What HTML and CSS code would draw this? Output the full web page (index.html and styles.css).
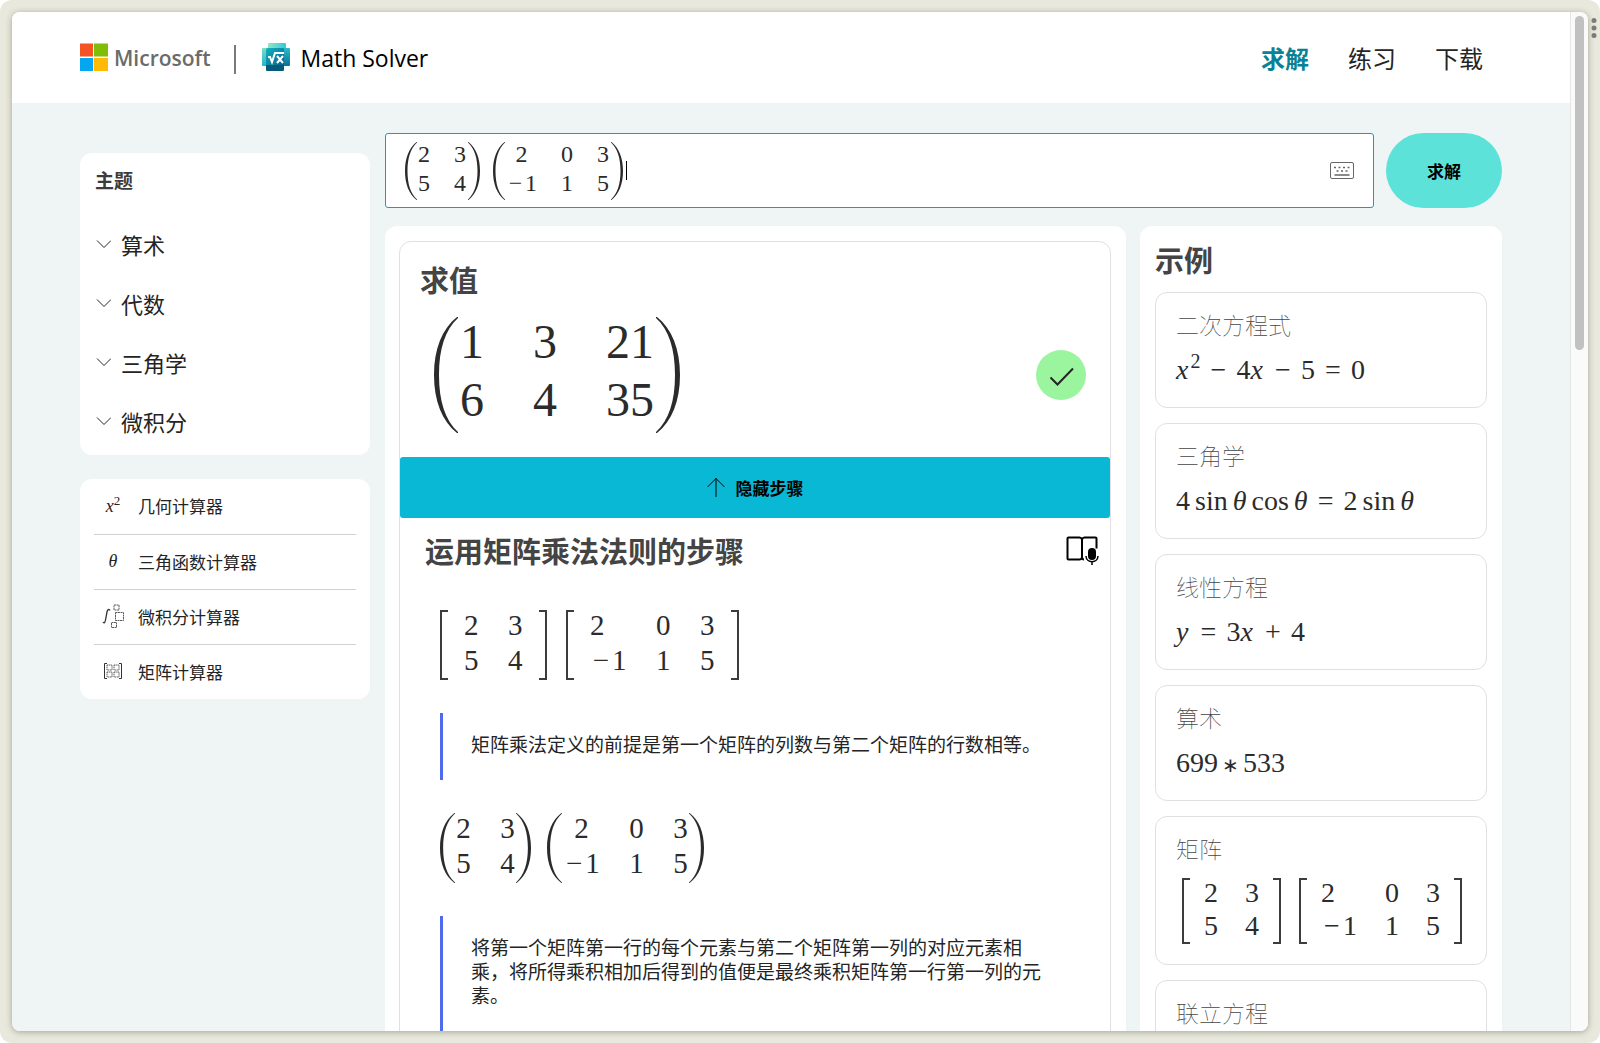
FILE: index.html
```html
<!DOCTYPE html>
<html lang="zh-CN">
<head>
<meta charset="utf-8">
<meta name="viewport" content="width=device-width, initial-scale=1">
<title>Microsoft Math Solver</title>
<link rel="stylesheet" href="styles.css">
</head>
<body>
<svg class="defs" aria-hidden="true">
  <symbol id="paren-l" viewBox="0 0 24 116" preserveAspectRatio="none"><path fill="currentColor" d="M23 0C8 12 0 32 0 58S8 104 23 116H24V115C11 103 5 84 5 58S11 13 24 1V0Z"/></symbol>
  <symbol id="paren-r" viewBox="0 0 24 116" preserveAspectRatio="none"><path fill="currentColor" d="M1 0C16 12 24 32 24 58S16 104 1 116H0V115C13 103 19 84 19 58S13 13 0 1V0Z"/></symbol>
  <symbol id="chevron" viewBox="0 0 16 16"><path fill="none" stroke="currentColor" d="M2 4.500l7 7 7-7"/></symbol>
</svg>
<div class="frame">
  <div class="window">
    <div class="page">
      <header class="header">
        <a class="brand" href="#">
          <svg width="28" height="28" viewBox="0 0 28 28" aria-hidden="true">
            <rect width="13" height="13" x="0" y="0.500" fill="#f35325"/><rect x="14" y="0.500" width="14" height="13" fill="#81bc06"/>
            <rect y="15" width="13" height="13" fill="#05a6f0"/><rect x="14" y="15" width="14" height="13" fill="#ffba08"/>
          </svg>
          <span class="brand-name">Microsoft</span>
        </a>
        <span class="divider"></span>
        <a class="product" href="#">
          <svg width="28" height="28" viewBox="0 0 28 28" aria-hidden="true">
            <defs>
              <linearGradient id="ga" x1="0" y1="0" x2="1" y2="0"><stop offset="0" stop-color="#8fe6c4"/><stop offset="1" stop-color="#32c8dc"/></linearGradient>
              <linearGradient id="gb" x1="0" y1="0" x2="0" y2="1"><stop offset="0" stop-color="#7fdcc0"/><stop offset="1" stop-color="#22b4d0"/></linearGradient>
              <linearGradient id="gc" x1="0" y1="0" x2="0" y2="1"><stop offset="0" stop-color="#2fb9c9"/><stop offset="1" stop-color="#087396"/></linearGradient>
              <linearGradient id="gd" x1="0" y1="0" x2="1" y2="1"><stop offset="0" stop-color="#11b3c4"/><stop offset="1" stop-color="#06648a"/></linearGradient>
            </defs>
            <rect x="6" y="0" width="18" height="14" rx="1" fill="url(#ga)"/>
            <rect x="0" y="5" width="12" height="18" rx="1" fill="url(#gb)"/>
            <rect x="14" y="5" width="14" height="18" rx="1" fill="url(#gc)"/>
            <rect x="4" y="14" width="18" height="14" rx="1" fill="#07597a"/>
            <path d="M6 5H22V22H4V7a2 2 0 0 1 2-2z" fill="url(#gd)"/>
            <path d="M6 14h2l2 5 3-9h9" fill="none" stroke="#fff" stroke-width="2"/>
            <path d="M15 13l6 7M21 13l-6 7" stroke="#fff" stroke-width="2"/>
          </svg>
          <span>Math Solver</span>
        </a>
        <nav class="nav">
          <a class="active" href="#">求解</a>
          <a href="#">练习</a>
          <a href="#">下载</a>
        </nav>
      </header>

      <div class="content">
        <aside class="sidebar">
          <section class="panel topics">
            <h2>主题</h2>
            <button type="button"><svg width="16" height="16"><use href="#chevron"/></svg>算术</button>
            <button type="button"><svg width="16" height="16"><use href="#chevron"/></svg>代数</button>
            <button type="button"><svg width="16" height="16"><use href="#chevron"/></svg>三角学</button>
            <button type="button"><svg width="16" height="16"><use href="#chevron"/></svg>微积分</button>
          </section>
          <nav class="panel calculators">
            <a href="#"><span class="calc-icon"><i>x</i><sup>2</sup></span>几何计算器</a>
            <a href="#"><span class="calc-icon"><i>θ</i></span>三角函数计算器</a>
            <a href="#"><span class="calc-icon"><svg width="24" height="24" viewBox="0 0 24 24" fill="none" stroke="#333"><path d="M9 6.500C8 4.500 6.500 5.500 6 8L4.500 16C4 19 3 19.500 2 18" stroke-width="1.300"/><g stroke-width=".8" stroke-dasharray="2 .5"><rect x="14.500" y="8.500" width="8" height="8"/><rect x="13" y="1" width="5" height="5"/><rect x="10.500" y="18.500" width="5" height="5"/></g></svg></span>微积分计算器</a>
            <a href="#"><span class="calc-icon"><svg width="20" height="18" viewBox="0 0 20 18" fill="none" stroke="#333"><path d="M4 1.500H1.500v15H4M16 1.500h2.500v15H16" stroke-width="1"/><g stroke-width=".8" stroke-dasharray="1.500 .6"><rect x="4" y="3" width="5" height="5"/><rect x="11" y="3" width="5" height="5"/><rect x="4" y="10" width="5" height="5"/><rect x="11" y="10" width="5" height="5"/></g></svg></span>矩阵计算器</a>
          </nav>
        </aside>

        <form class="search">
          <div class="math-field" role="textbox" tabindex="0" aria-label="输入数学题">
            <span class="mathline m24">
              <span class="matrix"><svg class="paren"><use href="#paren-l"/></svg><span class="cells two"><b>2</b><b>3</b><b>5</b><b>4</b></span><svg class="paren"><use href="#paren-r"/></svg></span>
              <span class="matrix"><svg class="paren"><use href="#paren-l"/></svg><span class="cells three"><b>2</b><b>0</b><b>3</b><b><span class="minus">−</span>1</b><b>1</b><b>5</b></span><svg class="paren"><use href="#paren-r"/></svg></span>
            </span>
            <span class="caret"></span>
            <button class="keyboard" type="button" aria-label="键盘">
              <svg width="24" height="17" viewBox="0 0 24 17"><rect x=".5" y=".5" width="23" height="16" rx="1.500" fill="#fff" stroke="#666"/><path d="M4 5.500h2m2.500 0h2m2.500 0h2m2.500 0h2M6.500 9h2m2.500 0h2m2.500 0h2M4.500 13h15" stroke="#666" stroke-width="1.300"/></svg>
            </button>
          </div>
          <button class="solve" type="submit">求解</button>
        </form>

        <main class="panel results">
          <article class="answer">
            <h2>求值</h2>
            <div class="result">
              <span class="mathline m48">
                <span class="matrix"><svg class="paren"><use href="#paren-l"/></svg><span class="cells wide"><b>1</b><b>3</b><b>21</b><b>6</b><b>4</b><b>35</b></span><svg class="paren"><use href="#paren-r"/></svg></span>
              </span>
              <span class="check"><svg width="50" height="50" viewBox="0 0 50 50" aria-label="正确"><path d="M14.500 27.500l7 7L37 18.500" fill="none" stroke="#242424" stroke-width="2"/></svg></span>
            </div>
            <button class="toggle" type="button">
              <svg width="18" height="20" viewBox="0 0 18 20"><path d="M9 20V1M.5 10L9 1.500 17.500 10" fill="none" stroke="#000"/></svg><span>隐藏步骤</span>
            </button>
            <div class="steps-head">
              <h3>运用矩阵乘法法则的步骤</h3>
              <button class="reader" type="button" aria-label="沉浸式阅读器">
                <svg width="33" height="29" viewBox="0 0 33 29"><path d="M16 3.500C15.500 2 14.500 1.500 13.500 1.500H2.500A1 1 0 0 0 1.500 2.500v20A1 1 0 0 0 2.500 23.500h11c1 0 2-.5 2.500-2V3.500C16.500 2 17.500 1.500 18.500 1.500H29.500A1 1 0 0 1 30.500 2.500v10M16 21c0 1.500 1 2.500 2 2.500" fill="none" stroke="#000" stroke-width="2"/><rect x="22" y="12" width="8" height="12" rx="4"/><path d="M20 20c0 7.500 12 7.500 12 0M26 25v4" fill="none" stroke="#000" stroke-width="1.500"/></svg>
              </button>
            </div>
            <div class="steps">
              <span class="mathline m29 brackets">
                <span class="matrix"><i class="bracket left"></i><span class="cells two"><b>2</b><b>3</b><b>5</b><b>4</b></span><i class="bracket right"></i></span>
                <span class="matrix"><i class="bracket left"></i><span class="cells three"><b>2</b><b>0</b><b>3</b><b><span class="minus">−</span>1</b><b>1</b><b>5</b></span><i class="bracket right"></i></span>
              </span>
              <p>矩阵乘法定义的前提是第一个矩阵的列数与第二个矩阵的行数相等。</p>
              <span class="mathline m29">
                <span class="matrix"><svg class="paren"><use href="#paren-l"/></svg><span class="cells two"><b>2</b><b>3</b><b>5</b><b>4</b></span><svg class="paren"><use href="#paren-r"/></svg></span>
                <span class="matrix"><svg class="paren"><use href="#paren-l"/></svg><span class="cells three"><b>2</b><b>0</b><b>3</b><b><span class="minus">−</span>1</b><b>1</b><b>5</b></span><svg class="paren"><use href="#paren-r"/></svg></span>
              </span>
              <p>将第一个矩阵第一行的每个元素与第二个矩阵第一列的对应元素相乘，将所得乘积相加后得到的值便是最终乘积矩阵第一行第一列的元素。</p>
            </div>
          </article>
        </main>

        <aside class="panel examples">
          <h2>示例</h2>
          <a class="example" href="#"><span class="title">二次方程式</span><span class="formula"><i class="var">x</i><sup>2</sup><span class="op">−</span>4<i class="var">x</i><span class="op">−</span>5<span class="op">=</span>0</span></a>
          <a class="example" href="#"><span class="title">三角学</span><span class="formula">4<span class="fn">sin</span><i>θ</i><span class="fn">cos</span><i>θ</i><span class="op">=</span>2<span class="fn">sin</span><i>θ</i></span></a>
          <a class="example" href="#"><span class="title">线性方程</span><span class="formula"><i class="var">y</i><span class="op">=</span>3<i class="var">x</i><span class="op">+</span>4</span></a>
          <a class="example" href="#"><span class="title">算术</span><span class="formula">699<span class="op narrow">∗</span>533</span></a>
          <a class="example" href="#"><span class="title">矩阵</span>
            <span class="mathline m28 brackets">
              <span class="matrix"><i class="bracket left"></i><span class="cells two"><b>2</b><b>3</b><b>5</b><b>4</b></span><i class="bracket right"></i></span>
              <span class="matrix"><i class="bracket left"></i><span class="cells three"><b>2</b><b>0</b><b>3</b><b><span class="minus">−</span>1</b><b>1</b><b>5</b></span><i class="bracket right"></i></span>
            </span>
          </a>
          <a class="example" href="#"><span class="title">联立方程</span><span class="formula"></span></a>
        </aside>
      </div>
    </div>
    <div class="scrollbar"><span class="thumb"></span></div>
  </div>
  <svg class="dots" width="6" height="20" viewBox="0 0 6 20" aria-hidden="true"><g fill="#7d7d78"><circle cx="3" cy="2.500" r="2.500"/><circle cx="3" cy="10" r="2.500"/><circle cx="3" cy="17.500" r="2.500"/></g></svg>
</div>
</body>
</html>
```
FILE: styles.css
```css
* { box-sizing: border-box; }
body { margin: 0; background: #fff; color: #242424; font-family: "Noto Sans CJK SC", sans-serif; }
h2, h3, p { margin: 0; }
a { color: inherit; text-decoration: none; }
button { border: 0; padding: 0; background: none; color: inherit; font-family: inherit; cursor: pointer; }
svg { display: block; flex: none; }
.defs { position: absolute; width: 0; height: 0; }

.frame { position: relative; height: 100vh; padding: 12px; border-radius: 12px; background: #e8e8dc; }
.window { display: flex; height: 100%; overflow: hidden; border-radius: 8px; background: #fff; box-shadow: 0 1px 6px rgba(60, 60, 40, .4); }
.page { flex: 1; min-width: 0; overflow: hidden; background: #eff5f5; }
.scrollbar { width: 18px; padding: 4px; border-left: 1px solid #e6e6e6; background: #fafafa; }
.thumb { display: block; width: 9px; height: 33%; border-radius: 5px; background: #c1c1c1; }
.dots { position: absolute; top: 18px; right: 3px; }

.header { display: flex; align-items: center; height: 91px; padding: 0 87px 2px 68px; background: #fff; font-family: "Open Sans", "Noto Sans CJK SC", sans-serif; }
.brand, .product { display: flex; align-items: center; gap: 6px; }
.brand-name { padding-top: 2px; color: #6b6b6b; font-size: 21px; font-weight: 600; }
.divider { width: 2px; height: 29px; margin: 5px 26px 0 24px; background: #7a7a7a; }
.product { gap: 10px; color: #000; font-size: 23px; }
.product span { padding-top: 2px; }
.nav { display: flex; gap: 39px; margin-left: auto; padding-top: 1px; font-size: 24px; }
.nav .active { color: #0a8296; font-weight: 700; }

.content { display: grid; grid-template-columns: 290px minmax(0, 1fr) 362px; grid-template-rows: auto auto; gap: 18px 15px; padding: 30px 68px 0; }
.panel { border-radius: 12px; background: #fff; }
.sidebar { display: flex; flex-direction: column; gap: 24px; grid-row: 1 / 3; padding-top: 20px; }
.topics { padding: 0 14px 5px 15px; }
.topics h2 { padding: 13px 0 20px; color: #3c3c3c; font-size: 19px; font-weight: 700; line-height: 28px; }
.topics button { display: flex; align-items: center; gap: 10px; width: 100%; height: 59px; font-size: 22px; }
.calculators { display: flex; flex-direction: column; padding: 0 14px; }
.calculators a { display: flex; align-items: center; gap: 12px; height: 55px; padding: 0 0 2px 6px; font-size: 17px; }
.calculators a + a { border-top: 1px solid #d1d1d1; }
.calc-icon { display: flex; justify-content: center; align-items: baseline; width: 26px; font: 18px/24px "Liberation Serif", serif; }
.calc-icon sup { font-size: 13px; line-height: 0; align-self: flex-start; padding-top: 7px; }

.search { display: flex; gap: 12px; grid-column: 2 / 4; }
.math-field { display: flex; flex: 1; align-items: center; height: 75px; padding: 0 19px; border: 1px solid #1c9db0; border-radius: 3px; background: #fff; }
.caret { width: 1px; height: 19px; margin-left: 3px; background: #000; }
.keyboard { margin-left: auto; }
.solve { width: 116px; padding-bottom: 1px; border-radius: 38px; background: #5de2d9; color: #000; font-size: 17px; font-weight: 700; }

.mathline { display: flex; align-items: center; color: #2b2b2b; font-family: "Liberation Serif", serif; }
.matrix { display: flex; align-items: center; }
.cells { display: grid; margin: -2px 0 2px; text-align: center; }
.cells b { font-weight: 400; }
.minus { display: inline-block; text-align: center; }
.m24 { gap: 13px; font-size: 24px; line-height: 29px; }
.m24 .paren { width: 12px; height: 58px; }
.m24 .cells { column-gap: 24px; padding: 0 2px 0 1px; }
.m24 .two { grid-template-columns: 12px 12px; }
.m24 .three { grid-template-columns: 31px 12px 12px; }
.m24 .minus { width: 19px; }
.m28 { font-size: 28px; line-height: 33px; }
.m28 .cells { column-gap: 27px; }
.m28 .two { grid-template-columns: 14px 14px; }
.m28 .three { grid-template-columns: 37px 14px 14px; }
.m28 .minus { width: 22px; }
.m29 { gap: 16px; font-size: 29px; line-height: 35px; }
.m29 .paren { width: 15px; height: 70px; }
.m29 .cells { column-gap: 29px; padding: 0 1px; }
.m29 .two { grid-template-columns: 15px 15px; }
.m29 .three { grid-template-columns: 37px 15px 15px; }
.m29 .minus { width: 22px; }
.m48 { font-size: 48px; line-height: 58px; }
.m48 .paren { width: 24px; height: 116px; }
.m48 .cells { grid-template-columns: 24px 24px 48px; column-gap: 49px; margin: -4px 0 4px; padding: 0 2px; }
.m28.brackets { gap: 18px; }
.m29.brackets { gap: 19px; }
.brackets .cells { padding: 0 14px; }
.m29.brackets .cells { padding: 0 16px; }
.brackets .cells b { text-align: left; }
.bracket { width: 8px; height: 70px; border: 2px solid #3c3c3c; }
.m28 .bracket { height: 66px; }
.bracket.left { border-right: 0; }
.bracket.right { border-left: 0; }

.results { margin-right: -1px; padding: 15px 15px 15px 14px; }
.answer { border: 1px solid #e0e0e0; border-radius: 12px; }
.answer h2, .steps-head h3, .examples h2 { color: #444; font-size: 29px; font-weight: 700; line-height: 40px; }
.answer h2 { padding: 17px 20px 18px; }
.result { display: flex; justify-content: space-between; align-items: center; padding: 0 24px 24px 34px; }
.check { border-radius: 50%; background: #9bf59e; }
.toggle { display: flex; align-items: center; justify-content: center; gap: 11px; width: 100%; height: 61px; padding-bottom: 1px; border-radius: 3px; background: #08b8d4; color: #000; font-size: 17px; font-weight: 700; }
.steps-head { display: flex; justify-content: space-between; align-items: center; height: 68px; padding: 0 11px 4px 25px; }
.steps { display: flex; flex-direction: column; gap: 33px; padding: 24px 64px 33px 40px; }
.steps p { padding: 19px 0 24px 28px; border-left: 3px solid #4f6bed; font-size: 19px; line-height: 24px; }

.examples { display: flex; flex-direction: column; gap: 15px; padding: 13px 15px 15px; }
.examples h2 { margin-bottom: -2px; }
.example { display: block; padding: 14px 20px 20px; border: 1px solid #e0e0e0; border-radius: 12px; }
.title { display: block; color: #444; font-size: 23px; font-weight: 100; line-height: 34px; }
.formula { display: flex; align-items: baseline; height: 46px; color: #2b2b2b; font: 28px/58px "Liberation Serif", serif; }
.formula sup { align-self: flex-start; font-size: 20px; line-height: 40px; }
.var { padding-right: 2px; }
.op { width: 36px; text-align: center; }
.op.narrow { width: 25px; font-size: 20px; }
.fn { padding: 0 5px; }
.example .mathline { padding: 13px 0 0 6px; }
```
